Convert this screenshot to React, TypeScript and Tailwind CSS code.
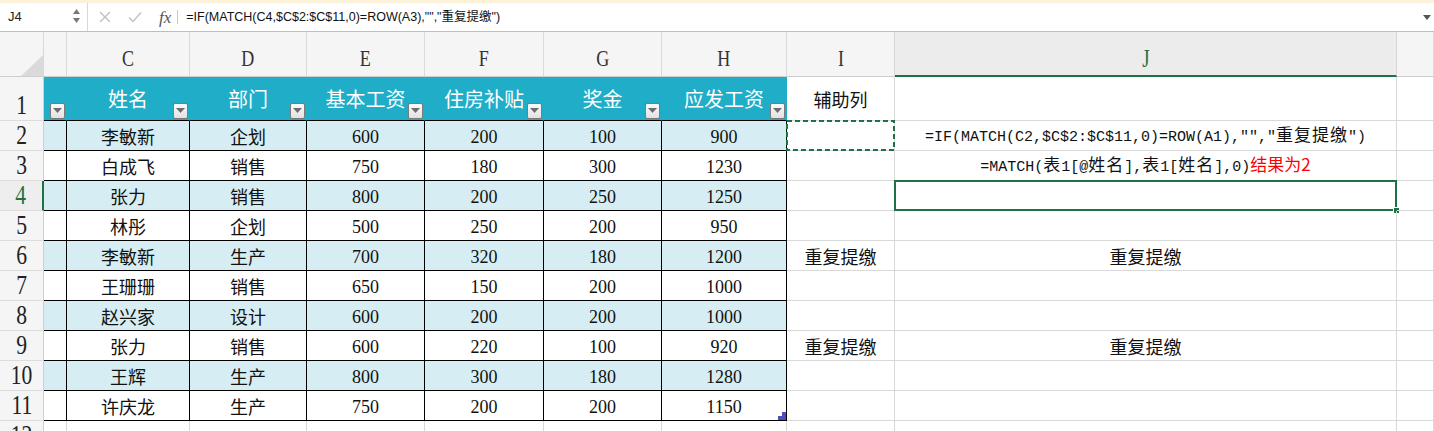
import React from "react";

const GRID =
  "grid grid-cols-[44px_23px_123px_117px_118px_119px_118px_125px_108px_502px_37px]";

type RowData = [string, string, number, number, number, number];

const data: RowData[] = [
  ["李敏新", "企划", 600, 200, 100, 900],
  ["白成飞", "销售", 750, 180, 300, 1230],
  ["张力", "销售", 800, 200, 250, 1250],
  ["林彤", "企划", 500, 250, 200, 950],
  ["李敏新", "生产", 700, 320, 180, 1200],
  ["王珊珊", "销售", 650, 150, 200, 1000],
  ["赵兴家", "设计", 600, 200, 200, 1000],
  ["张力", "销售", 600, 220, 100, 920],
  ["王辉", "生产", 800, 300, 180, 1280],
  ["许庆龙", "生产", 750, 200, 200, 1150],
];

const TBL = "border-r border-b border-black";
const GRD = "border-r border-b border-[#d9d9d9]";
const CELLFONT = "font-['Liberation_Serif','Noto_Sans_CJK_SC',serif]";
const CJKFONT = "font-['Noto_Sans_CJK_SC',sans-serif]";

function Mono({ text }: { text: string }) {
  const parts = text.split(/([\u4e00-\u9fff]+)/);
  return (
    <span className="font-['Liberation_Mono',monospace] text-[15px] text-[#111] whitespace-pre">
      {parts.map((p, i) =>
        /[\u4e00-\u9fff]/.test(p) ? (
          <span key={i} className={`${CJKFONT} text-[17px] tracking-[1px]`}>
            {p}
          </span>
        ) : (
          <span key={i}>{p}</span>
        )
      )}
    </span>
  );
}

function FilterBtn() {
  return (
    <div className="absolute right-[1px] bottom-[1px] w-[15px] h-[16px] rounded-[2px] border border-[#7b7b7b] bg-linear-to-b from-[#fbfbfb] to-[#e2e2e2] flex items-center justify-center">
      <svg width="9" height="5" viewBox="0 0 9 5" className="-mt-[1px]">
        <path d="M0 0H9L4.5 5Z" fill="#6d6d6d" />
      </svg>
    </div>
  );
}

function FormulaBar() {
  return (
    <div className="h-[32px] flex flex-col">
      <div className="h-[3px] bg-[#fbf2d9]" />
      <div className="flex-1 flex items-center border-b border-[#bdbdbd] relative bg-white">
        <div className="w-[88px] h-full flex items-center border-r border-[#d9d9d9] relative">
          <span className="pl-[8px] text-[13px] text-[#222] font-['Liberation_Sans',sans-serif]">
            J4
          </span>
          <div className="absolute left-[73px] top-[6px] flex flex-col gap-[4px]">
            <svg width="7" height="5" viewBox="0 0 7 5">
              <path d="M0 5L3.5 0L7 5Z" fill="#777" />
            </svg>
            <svg width="7" height="5" viewBox="0 0 7 5">
              <path d="M0 0H7L3.5 5Z" fill="#777" />
            </svg>
          </div>
        </div>
        <svg width="12" height="12" viewBox="0 0 12 12" className="ml-[11px]">
          <path d="M1 1L11 11M11 1L1 11" stroke="#c3c3c3" strokeWidth="1.5" />
        </svg>
        <svg width="14" height="12" viewBox="0 0 14 12" className="ml-[17px]">
          <path d="M1 6.5L5 10.5L13 1.5" stroke="#c3c3c3" strokeWidth="1.5" fill="none" />
        </svg>
        <span className="ml-[17px] font-['Liberation_Serif',serif] italic text-[17px] text-[#555] leading-none">
          fx
        </span>
        <div className="ml-[6px] w-px h-[14px] bg-[#c8c8c8]" />
        <span className="ml-[8px] text-[12.5px] text-[#111] font-['Liberation_Sans','Noto_Sans_CJK_SC',sans-serif] whitespace-pre">
          =IF(MATCH(C4,$C$2:$C$11,0)=ROW(A3),"","重复提缴")
        </span>
        <svg width="8" height="5" viewBox="0 0 8 5" className="absolute right-[3px] top-[12px]">
          <path d="M0 0H8L4 5Z" fill="#555" />
        </svg>
      </div>
    </div>
  );
}

function ColHead({ label, sel }: { label?: string; sel?: boolean }) {
  return (
    <div
      className={
        sel
          ? "h-[45px] bg-[#ececec] border-r border-[#d6d6d6] border-b-2 border-b-[#1e7145] flex items-center justify-center pt-[9px]"
          : "h-[45px] bg-[#f5f5f5] border-r border-[#d9d9d9] border-b border-b-[#cdcdcd] flex items-center justify-center pt-[8px]"
      }
    >
      {label && (
        <span
          className={
            sel
              ? "inline-block scale-x-75 font-['Liberation_Serif',serif] text-[25px] leading-none text-[#1e7145]"
              : "inline-block scale-x-75 font-['Liberation_Serif',serif] text-[24px] leading-none text-[#333]"
          }
        >
          {label}
        </span>
      )}
    </div>
  );
}

function RowHead({ n, tall, sel }: { n: number; tall?: boolean; sel?: boolean }) {
  return (
    <div
      className={
        (tall ? "h-[44px] " : "h-[30px] ") +
        (sel
          ? "bg-[#eeeeee] border-r-2 border-r-[#1e7145] border-b border-b-[#dcdcdc]"
          : "bg-[#f5f5f5] border-r border-r-[#d0d0d0] border-b border-b-[#dcdcdc]") +
        " flex items-end justify-center overflow-hidden"
      }
    >
      <span
        className={
          sel
            ? "inline-block scale-x-80 font-['Liberation_Serif',serif] text-[27px] leading-[30px] text-[#1e7145]"
            : "inline-block scale-x-80 font-['Liberation_Serif',serif] text-[27px] leading-[30px] text-[#222]"
        }
      >
        {n}
      </span>
    </div>
  );
}

function HeadCell({ label }: { label: string }) {
  return (
    <div className="h-[44px] relative bg-[#1fadc8] border-b border-b-black border-r border-r-[#1fadc8] flex items-center justify-center">
      <span className={`${CJKFONT} text-[20px] text-white leading-none`}>{label}</span>
      <FilterBtn />
    </div>
  );
}

function Cell({
  className,
  children,
}: {
  className: string;
  children?: React.ReactNode;
}) {
  return (
    <div className={`h-[30px] flex items-center justify-center relative ${className}`}>
      {children}
    </div>
  );
}

function Num({ v }: { v: number }) {
  return (
    <span className="font-['Liberation_Serif',serif] text-[18px] leading-none pt-[2px] text-[#111]">
      {v}
    </span>
  );
}

function Zh({ t }: { t: string }) {
  return <span className={`${CJKFONT} text-[18px] leading-none text-[#111]`}>{t}</span>;
}

export default function App() {
  return (
    <div className="w-[1434px] h-[431px] overflow-hidden bg-white font-['Liberation_Sans','Noto_Sans_CJK_SC',sans-serif] text-black">
      <FormulaBar />
      <div className={GRID}>
        {/* Column headers */}
        <div className="h-[45px] bg-[#f5f5f5] border-r border-[#d9d9d9] border-b border-b-[#cdcdcd] relative">
          <svg width="44" height="45" viewBox="0 0 44 45" className="absolute left-0 top-0">
            <path d="M43 23L43 44L21 44Z" fill="#dadada" />
          </svg>
        </div>
        <ColHead />
        <ColHead label="C" />
        <ColHead label="D" />
        <ColHead label="E" />
        <ColHead label="F" />
        <ColHead label="G" />
        <ColHead label="H" />
        <ColHead label="I" />
        <ColHead label="J" sel />
        <ColHead />

        {/* Row 1 */}
        <RowHead n={1} tall />
        <div className="h-[44px] relative bg-[#1fadc8] border-b border-b-black border-r border-r-[#1fadc8]">
          <FilterBtn />
        </div>
        <HeadCell label="姓名" />
        <HeadCell label="部门" />
        <HeadCell label="基本工资" />
        <HeadCell label="住房补贴" />
        <HeadCell label="奖金" />
        <HeadCell label="应发工资" />
        <div className={`h-[44px] flex items-center justify-center ${GRD}`}>
          <Zh t="辅助列" />
        </div>
        <div className={`h-[44px] ${GRD}`} />
        <div className={`h-[44px] ${GRD}`} />

        {/* Data rows */}
        {data.map((r, i) => {
          const n = i + 2;
          const bg = i % 2 === 0 ? "bg-[#d6eef3]" : "bg-white";
          const dup = n === 6 || n === 9;
          return (
            <React.Fragment key={n}>
              <RowHead n={n} sel={n === 4} />
              <Cell className={`${TBL} ${bg}`} />
              <Cell className={`${TBL} ${bg} ${CELLFONT}`}>
                <Zh t={r[0]} />
              </Cell>
              <Cell className={`${TBL} ${bg}`}>
                <Zh t={r[1]} />
              </Cell>
              <Cell className={`${TBL} ${bg}`}>
                <Num v={r[2]} />
              </Cell>
              <Cell className={`${TBL} ${bg}`}>
                <Num v={r[3]} />
              </Cell>
              <Cell className={`${TBL} ${bg}`}>
                <Num v={r[4]} />
              </Cell>
              <Cell className={`${TBL} ${bg}`}>
                <Num v={r[5]} />
                {n === 11 && (
                  <svg
                    width="8"
                    height="8"
                    viewBox="0 0 8 8"
                    className="absolute right-0 bottom-0"
                  >
                    <path d="M4 0H8V8H0V4H4Z" fill="#4b51b8" />
                  </svg>
                )}
              </Cell>
              <Cell className={GRD}>
                {dup && <Zh t="重复提缴" />}
                {n === 2 && (
                  <svg
                    className="absolute -left-px -top-px"
                    width="109"
                    height="31"
                    viewBox="0 0 109 31"
                  >
                    <rect
                      x="1"
                      y="1"
                      width="107"
                      height="29"
                      fill="none"
                      stroke="#1e7145"
                      strokeWidth="2"
                      strokeDasharray="5 3"
                    />
                  </svg>
                )}
              </Cell>
              <Cell className={GRD}>
                {dup && <Zh t="重复提缴" />}
                {n === 2 && <Mono text={'=IF(MATCH(C2,$C$2:$C$11,0)=ROW(A1),"","重复提缴")'} />}
                {n === 3 && (
                  <span className="whitespace-pre">
                    <Mono text="=MATCH(表1[@姓名],表1[姓名],0)" />
                    <span className={`${CJKFONT} text-[17px] text-[#ff0000]`}>结果为2</span>
                  </span>
                )}
                {n === 4 && (
                  <>
                    <div className="absolute -left-px -top-px -right-px -bottom-px border-2 border-[#1e7145]" />
                    <div className="absolute -right-[4px] -bottom-[4px] w-[7px] h-[7px] bg-[#1e7145] border border-white" />
                  </>
                )}
              </Cell>
              <Cell className={GRD} />
            </React.Fragment>
          );
        })}

        {/* Row 12 (partial) */}
        <RowHead n={12} />
        <Cell className={GRD} />
        <Cell className={GRD} />
        <Cell className={GRD} />
        <Cell className={GRD} />
        <Cell className={GRD} />
        <Cell className={GRD} />
        <Cell className={GRD} />
        <Cell className={GRD} />
        <Cell className={GRD} />
        <Cell className={GRD} />
      </div>
    </div>
  );
}
